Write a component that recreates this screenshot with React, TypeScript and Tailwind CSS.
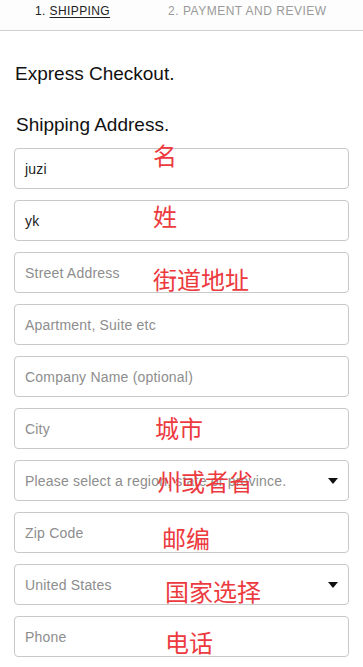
import React from "react";

type Field = {
  text: string;
  filled?: boolean;
  select?: boolean;
  note?: string;
  nx?: number;
  ny?: number;
};

const fields: Field[] = [
  { text: "juzi", filled: true, note: "名", nx: 138, ny: -6 },
  { text: "yk", filled: true, note: "姓", nx: 138, ny: 3 },
  { text: "Street Address", note: "街道地址", nx: 138, ny: 14 },
  { text: "Apartment, Suite etc" },
  { text: "Company Name (optional)" },
  { text: "City", note: "城市", nx: 140, ny: 7 },
  { text: "Please select a region, state or province.", select: true, note: "州或者省", nx: 142, ny: 8 },
  { text: "Zip Code", note: "邮编", nx: 147, ny: 13 },
  { text: "United States", select: true, note: "国家选择", nx: 150, ny: 14 },
  { text: "Phone", note: "电话", nx: 150, ny: 13 },
];

export default function App() {
  return (
    <div
      className="w-[363px] h-[667px] overflow-hidden bg-white"
      style={{ fontFamily: '"Liberation Sans", Arial, sans-serif' }}
    >
      <div className="h-[31px] flex items-start pt-[3px] border-b border-[#cfcfcf] bg-[#fdfdfd]">
        <div className="ml-[35px] text-[12px] tracking-[0.4px] text-[#222] leading-[16px]">
          1. <span className="underline underline-offset-2">SHIPPING</span>
        </div>
        <div className="ml-[58px] text-[12px] tracking-[0.5px] text-[#9a9a9a] leading-[16px]">
          2. PAYMENT AND REVIEW
        </div>
      </div>
      <div className="px-[14px]">
        <div className="mt-[32px] ml-[1px] text-[19px] text-[#111] leading-[22px]">Express Checkout.</div>
        <div className="mt-[29px] ml-[2px] text-[19px] text-[#111] leading-[22px]">Shipping Address.</div>
        <div className="mt-[12px] flex flex-col gap-[11px]">
          {fields.map((f, i) => (
            <div
              key={i}
              className="relative h-[41px] w-[335px] rounded-[4px] border border-[#c9c9c9] flex items-center pl-[10px] pr-[10px]"
            >
              <span
                className={
                  "pt-[2px] text-[14px] tracking-[0.2px] whitespace-nowrap " +
                  (f.filled ? "text-[#222]" : "text-[#8d8d8d]")
                }
              >
                {f.text}
              </span>
              {f.select && (
                <svg className="ml-auto" width="10" height="6" viewBox="0 0 10 6">
                  <path d="M0 0 L10 0 L5 6 Z" fill="#111" />
                </svg>
              )}
              {f.note && (
                <span
                  className="absolute text-[24px] leading-none text-[#ec3a3f] whitespace-nowrap"
                  style={{
                    left: f.nx,
                    top: f.ny,
                    fontFamily: '"Noto Sans CJK SC", sans-serif',
                  }}
                >
                  {f.note}
                </span>
              )}
            </div>
          ))}
        </div>
      </div>
    </div>
  );
}
